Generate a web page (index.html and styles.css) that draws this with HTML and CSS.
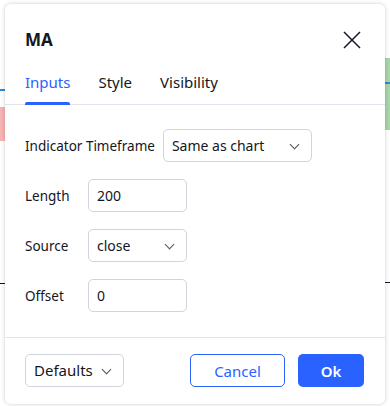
FILE: index.html
```html
<!DOCTYPE html>
<html lang="en">
<head>
    <meta charset="UTF-8">
    <meta name="viewport" content="width=device-width, initial-scale=1.0">
    <title>MA</title>
    <link rel="stylesheet" href="styles.css">
</head>
<body>
    <div class="chart">
        <span class="chart-bit bit-pink"></span>
        <span class="chart-bit bit-blue-left"></span>
        <span class="chart-bit bit-green"></span>
        <span class="chart-bit bit-blue-right"></span>
        <span class="chart-bit bit-tick"></span>
        <span class="chart-bit bit-tick-left"></span>
    </div>
    <div class="dialog">
        <header class="dialog-header">
            <h2>MA</h2>
            <button class="close" aria-label="Close">
                <svg width="18" height="18" viewBox="0 0 18 18"><path d="M1 1 L17 17 M17 1 L1 17" stroke="#131722" stroke-width="1.5" fill="none"/></svg>
            </button>
        </header>
        <nav class="tabs">
            <span class="tab active">Inputs</span>
            <span class="tab">Style</span>
            <span class="tab">Visibility</span>
        </nav>
        <main class="content">
            <div class="row">
                <span class="label wide">Indicator Timeframe</span>
                <div class="field select timeframe">Same as chart<span class="chev"></span></div>
            </div>
            <div class="row">
                <span class="label">Length</span>
                <div class="field">200</div>
            </div>
            <div class="row">
                <span class="label">Source</span>
                <div class="field select">close<span class="chev"></span></div>
            </div>
            <div class="row">
                <span class="label">Offset</span>
                <div class="field">0</div>
            </div>
        </main>
        <footer class="dialog-footer">
            <div class="field select defaults">Defaults<span class="chev"></span></div>
            <div class="actions">
                <button class="btn cancel">Cancel</button>
                <button class="btn ok">Ok</button>
            </div>
        </footer>
    </div>
</body>
</html>
```

FILE: styles.css
```css
body {
    margin: 0;
    padding: 4px 5px 2px;
    background: #fff;
    font-family: "Noto Sans", Arial, sans-serif;
    color: #131722;
    position: relative;
    height: 400px;
}
.chart-bit {
    position: absolute;
    display: block;
}
.bit-pink {
    left: 0;
    top: 107px;
    width: 5px;
    height: 34px;
    background: #f7b3b3;
}
.bit-blue-left {
    left: 0;
    top: 89px;
    width: 5px;
    height: 2px;
    background: #2e8bd6;
}
.bit-green {
    right: 0;
    top: 58px;
    width: 5px;
    height: 72px;
    background: #a5d6a7;
}
.bit-blue-right {
    right: 0;
    top: 82px;
    width: 5px;
    height: 2px;
    background: #2e8bd6;
}
.bit-tick {
    right: 0;
    top: 282px;
    width: 5px;
    height: 1px;
    background: #131722;
}
.bit-tick-left {
    left: 0;
    top: 283px;
    width: 5px;
    height: 1px;
    background: #131722;
}
.dialog {
    position: relative;
    width: 380px;
    height: 400px;
    background: #fff;
    border-radius: 6px;
    box-shadow: 0 0 4px rgba(0,0,0,0.2);
    display: flex;
    flex-direction: column;
}
.dialog-header {
    display: flex;
    align-items: center;
    justify-content: space-between;
    padding: 24px 24px 12px 20px;
    height: 24px;
}
.dialog-header h2 {
    margin: 0;
    font-size: 17px;
    font-weight: 700;
    line-height: 24px;
}
.close {
    border: none;
    background: none;
    padding: 0;
    width: 18px;
    height: 18px;
    cursor: pointer;
}
.tabs {
    display: flex;
    gap: 28px;
    padding: 0 20px;
    height: 40px;
    border-bottom: 1px solid #e0e3eb;
}
.tab {
    position: relative;
    font-size: 15px;
    line-height: 36px;
}
.tab.active {
    color: #2962ff;
}
.tab.active::after {
    content: "";
    position: absolute;
    left: 0;
    right: 0;
    bottom: -1px;
    height: 3px;
    background: #2962ff;
    border-radius: 2px 2px 0 0;
}
.content {
    flex: 1;
    padding: 24px 20px 0;
    display: flex;
    flex-direction: column;
    gap: 17px;
    border-bottom: 1px solid #e0e3eb;
}
.row {
    display: flex;
    align-items: center;
}
.label {
    width: 63px;
    font-size: 13.5px;
}
.label.wide {
    width: auto;
    margin-right: 8px;
}
.field {
    position: relative;
    box-sizing: border-box;
    width: 99px;
    height: 33px;
    border: 1px solid #d1d4dc;
    border-radius: 5px;
    padding-left: 8px;
    font-size: 14px;
    line-height: 31px;
}
.select.timeframe {
    width: 149px;
}
.chev {
    position: absolute;
    right: 13px;
    top: 11px;
    width: 6px;
    height: 6px;
    border-right: 1px solid #50535e;
    border-bottom: 1px solid #50535e;
    transform: rotate(45deg);
}
.dialog-footer {
    display: flex;
    align-items: center;
    justify-content: space-between;
    padding: 16px 21px 17px 20px;
}
.defaults {
    font-size: 15px;
}
.actions {
    display: flex;
    gap: 13px;
}
.btn {
    height: 33px;
    border-radius: 5px;
    font-family: inherit;
    font-size: 15px;
    cursor: pointer;
}
.cancel {
    width: 95px;
    background: #fff;
    color: #2962ff;
    border: 1px solid #2962ff;
}
.ok {
    width: 66px;
    background: #2962ff;
    color: #fff;
    border: none;
    font-weight: 600;
}
```
